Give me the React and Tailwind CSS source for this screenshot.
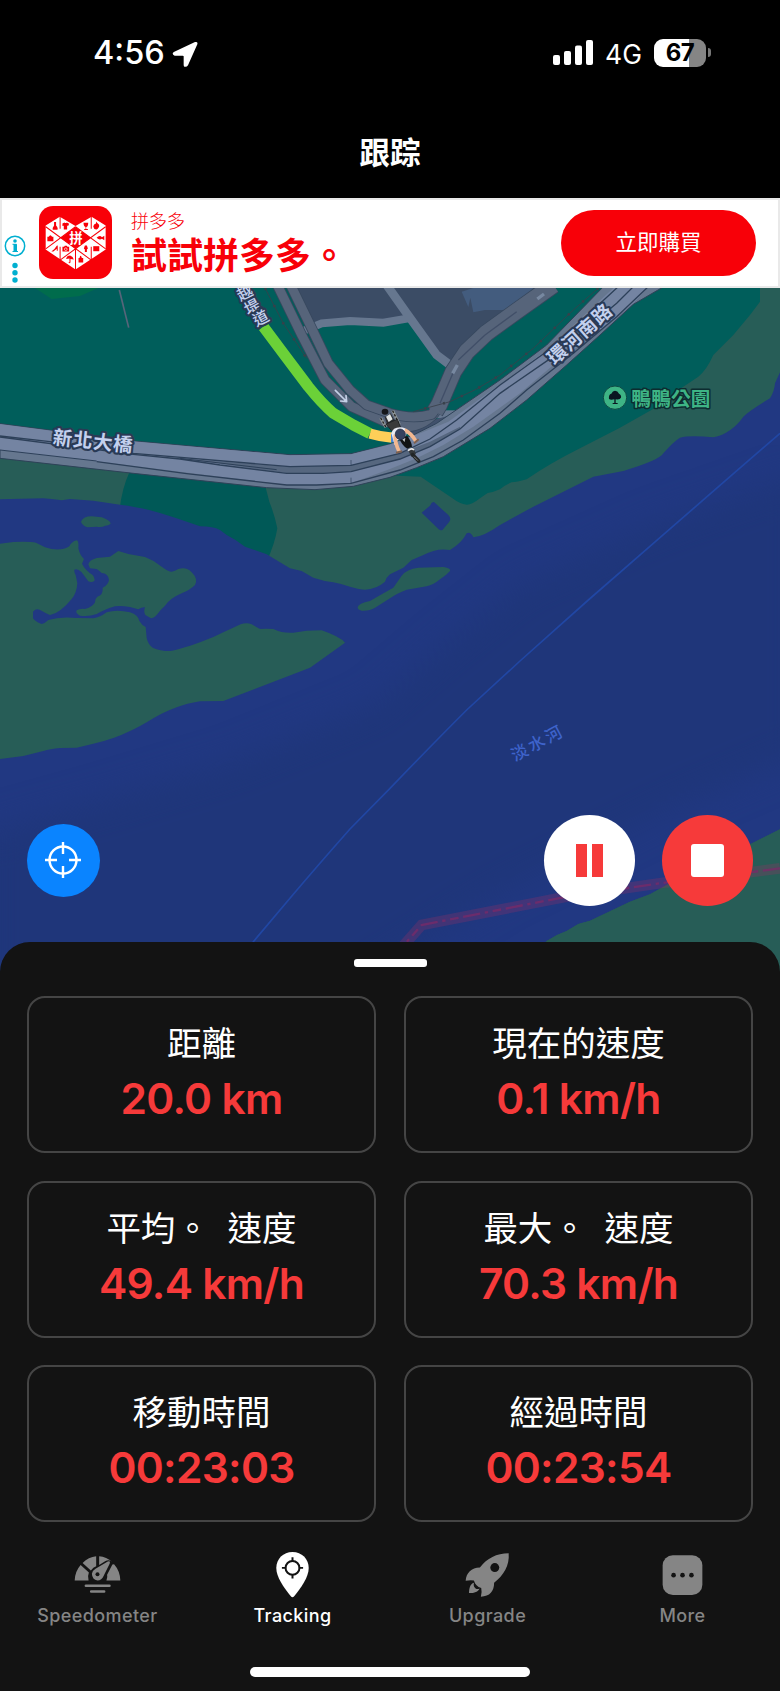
import React, { useState } from 'react'

const CJK = "font-['Noto_Sans_CJK_TC',sans-serif]"

const stats = [
  { label: '距離', value: '20.0 km' },
  { label: '現在的速度', value: '0.1 km/h' },
  { label: '平均。 速度', value: '49.4 km/h' },
  { label: '最大。 速度', value: '70.3 km/h' },
  { label: '移動時間', value: '00:23:03' },
  { label: '經過時間', value: '00:23:54' },
]

const tabs = [
  { name: 'Speedometer', Icon: SpeedometerIcon },
  { name: 'Tracking', Icon: PinIcon },
  { name: 'Upgrade', Icon: RocketIcon },
  { name: 'More', Icon: MoreIcon },
]

function SpeedometerIcon() {
  return (
    <svg viewBox="160 62 142 142" className="w-[47px] h-[47px]" fill="currentColor">
      <path d="M162 151Q163 123 180 104L205 127Q200 139 204 151Z" />
      <path d="M186 98Q204 80 227 78V108Q218 111 211 121Z" />
      <path d="M236 78Q258 80 276 95Q266 86 254 93L236 104Z" />
      <path d="M281 102Q299 122 300 151H258Q262 141 260 134L276 103Z" />
      <path d="M214 131Q215 122 225 116L262 94Q271 91 268 100L249 138Q244 150 231 151Q215 149 214 131Z" />
      <circle cx="231" cy="132" r="6" fill="#131313" />
      <path d="M196 167H267M212 184.500H251" stroke="currentColor" strokeWidth="8" strokeLinecap="round" />
    </svg>
  )
}

function PinIcon() {
  return (
    <svg viewBox="746 62 142 142" className="w-[47px] h-[47px]">
      <path d="M817 65C789 65 768 86 768 113C768 141 791 172 812 199Q817 205 822 199C843 172 866 141 866 113C866 86 845 65 817 65Z" fill="currentColor" />
      <circle cx="817" cy="113" r="21" fill="none" stroke="#131313" strokeWidth="6" />
      <path d="M817 81V94M817 132V145M785 113H798M836 113H849" stroke="#131313" strokeWidth="6" />
    </svg>
  )
}

function RocketIcon() {
  return (
    <svg viewBox="102 62 142 142" className="w-[47px] h-[47px]">
      <path
        fill="currentColor"
        d="M237 69C200 69 172 84 150 112C124 113 109 128 107 152Q121 149 132 151C135 163 143 170 154 174Q157 187 153 200C180 199 193 184 193 158C222 135 240 107 237 69Z"
      />
      <circle cx="195" cy="112" r="13.500" fill="#131313" />
      <path fill="currentColor" d="M132 158C120 162 118 174 117 189C134 189 145 185 149 175Q144 178 138 176Q129 170 132 158Z" />
    </svg>
  )
}

function MoreIcon() {
  return (
    <svg viewBox="685 62 142 142" className="w-[47px] h-[47px]">
      <rect x="696" y="75" width="120" height="120" rx="31" fill="currentColor" />
      <circle cx="729" cy="135" r="7" fill="#131313" />
      <circle cx="756" cy="135" r="7" fill="#131313" />
      <circle cx="783" cy="135" r="7" fill="#131313" />
    </svg>
  )
}

function StatusBar() {
  return (
    <div className="flex items-center justify-between h-[104px] pl-[93px] pr-[69px] text-white font-['Inter',sans-serif]">
      <div className="flex items-center gap-[7px] pt-[3px]">
        <span className="text-[32.500px] leading-none font-medium">4:56</span>
        <svg viewBox="274 60 78 78" className="w-[26px] h-[26px]">
          <path d="M281 92L343 63Q352 61 350 70L322 133Q318 139 311 137Q309 136 309 131V106Q309 104 306 104H282Q276 103 276 97Q277 94 281 92Z" fill="white" />
        </svg>
      </div>
      <div className="flex items-center pt-px">
        <svg viewBox="0 0 40 25" className="w-10 h-[25px]">
          <rect x="0" y="15" width="7" height="10" rx="2" fill="white" />
          <rect x="11" y="11" width="7" height="14" rx="2" fill="white" />
          <rect x="22" y="5.500" width="7" height="19.500" rx="2" fill="white" />
          <rect x="33" y="0" width="7" height="25" rx="2" fill="white" />
        </svg>
        <span className="ml-3 pt-[3px] text-[26.500px] leading-none">4G</span>
        <div className="ml-[12px] w-[52px] h-7 rounded-[9px] bg-[linear-gradient(90deg,#fff_67%,#858585_67%)] flex items-center justify-center">
          <span className="text-black text-[24px] leading-none font-bold tracking-[-0.5px]">67</span>
        </div>
        <div className="ml-[2px] w-[3px] h-[9px] rounded-r-full bg-[#777]"></div>
      </div>
    </div>
  )
}

function AdLogo() {
  return (
    <svg viewBox="118 50 218 218" className="w-[73px] h-[73px] shrink-0">
      <rect x="118" y="50" width="218" height="218" rx="42" fill="#f80008" />
      <path d="M138 108L180 82L227 110L275 82L317 108V180L227 240L138 180Z" fill="white" />
      <path
        d="M138 112L272 210M317 112L183 210M227 112L138 178M227 112L317 178M181 80V118M181 172V212M274 80V118M274 172V212M227 176V242"
        stroke="#f80008" strokeWidth="3" fill="none"
      />
      <path d="M183 145L227 113L272 145L227 178Z" fill="#f80008" />
      <text x="228" y="160" textAnchor="middle" fontSize="40" fontWeight="700" fill="white" className={CJK}>拼</text>
      <g fill="#f80008">
        <path d="M163 98H169V108Q176 116 173 121H159Q157 116 163 108Z" />
        <path d="M188 102L194 99Q197 103 201 99L208 103L205 110L202 108V120H192V109L188 110Z" />
        <path d="M251 100H265Q265 112 259 113V119H264V122H253V119H257V113Q251 111 251 100Z" />
        <path d="M289 96L292 101Q300 106 297 113Q293 121 289 120Q281 119 280 111Q281 103 288 102Z" />
        <path d="M143 142H147Q152 132 157 142H161V155H143Z" />
        <path d="M290 145Q299 136 306 143L313 139V152L306 148Q299 154 290 145Z" />
        <path d="M174 168V184H171V178L161 186H155Q165 180 171 169Z" />
        <path d="M188 172H193L195 169H201L203 172H208V186H188Z" />
        <path d="M255 168H261L264 177L261 180V187H255V180L252 177Z" />
        <path d="M280 170H298V185H280Z" />
        <path d="M199 208Q201 198 211 198Q220 201 222 210L212 208V219Q208 223 206 218H209V207Z" />
        <path d="M236 205H239Q242 192 246 205H250V219H236Z" />
      </g>
      <circle cx="198" cy="179" r="4" fill="none" stroke="white" strokeWidth="2" />
    </svg>
  )
}

function AdBanner() {
  return (
    <div className="h-[90px] flex items-center bg-white border-2 border-[#e9e9e9] pr-[22px]">
      <div className="w-[26px] mt-[34px] flex flex-col items-center">
        <svg viewBox="0 0 22 50" className="w-[22px] h-[50px]">
          <circle cx="11" cy="11" r="9.700" fill="none" stroke="#00afd0" strokeWidth="1.500" />
          <circle cx="11" cy="6" r="1.800" fill="#00afd0" />
          <path d="M8.500 9.300H12.500V16.500M8.500 16.500H14" stroke="#00afd0" strokeWidth="1" fill="none" />
          <path d="M11 9V17" stroke="#00afd0" strokeWidth="3" />
          <circle cx="11" cy="30.500" r="2.700" fill="#00afd0" />
          <circle cx="11" cy="37.800" r="2.700" fill="#00afd0" />
          <circle cx="11" cy="45" r="2.700" fill="#00afd0" />
        </svg>
      </div>
      <div className="ml-[11px] mb-px">
        <AdLogo />
      </div>
      <div className={`ml-[19px] mb-[5px] flex-1 text-[#f80008] ${CJK}`}>
        <p className="text-[18px] leading-[24px] font-light">拼多多</p>
        <p className="text-[36px] leading-[42px] font-bold">試試拼多多。</p>
      </div>
      <button className={`w-[195px] h-[66px] pb-[4px] rounded-full bg-[#f80008] text-white text-[21.500px] leading-none ${CJK}`}>
        立即購買
      </button>
    </div>
  )
}

function Motorcycle() {
  return (
    <g transform="translate(1050 315)">
      <path d="M92 84L108 112M128 62L148 104" stroke="#8d9496" strokeWidth="9" />
      <path d="M92 84L108 112M128 62L148 104" stroke="#222" strokeWidth="4" strokeDasharray="7 5" />
      <ellipse cx="105" cy="65" rx="10" ry="9" fill="#15171a" />
      <path d="M104 82L122 70L134 92L112 104Z" fill="#2b2e31" />
      <path d="M108 80L120 72L128 88L116 96Z" fill="#dfe3e2" />
      <path d="M108 102L142 88L152 112L126 124Z" fill="#3a3a3a" stroke="#17191b" strokeWidth="2" />
      <path d="M124 130Q128 112 150 112Q168 112 172 124L166 142L140 152L134 166Z" fill="#e8ebf4" />
      <path d="M136 134Q134 158 148 186" stroke="#f2b78f" strokeWidth="11" fill="none" />
      <path d="M164 120Q184 130 198 154" stroke="#f2b78f" strokeWidth="11" fill="none" />
      <path d="M138 188L156 184M192 160L206 148" stroke="#7d6050" strokeWidth="6" />
      <path d="M146 142L172 138Q186 158 186 170L172 176Q156 168 146 142Z" fill="#111314" />
      <path d="M156 148L166 144L164 156Z" fill="#b9bdbd" />
      <ellipse cx="151" cy="133" rx="15" ry="16" transform="rotate(-25 151 133)" fill="#35425f" stroke="#202a42" strokeWidth="2" />
      <path d="M174 180L190 174L198 192L184 200Z" fill="#33373a" />
      <path d="M174 182Q184 172 192 180" stroke="#e8e8e8" strokeWidth="5" fill="none" />
      <path d="M188 194L206 213" stroke="#222526" strokeWidth="11" strokeLinecap="round" />
      <path d="M192 200L204 212" stroke="#77797a" strokeWidth="3" />
    </g>
  )
}

// Map tile, drawn at three units per pixel
function MapCanvas() {
  return (
    <svg viewBox="0 9 2340 2076" className="block w-[780px] h-[692px]">
      <defs>
        <filter id="soft" x="-20%" y="-20%" width="140%" height="140%" colorInterpolationFilters="sRGB">
          <feGaussianBlur stdDeviation="50" />
        </filter>
        <clipPath id="river">
          <rect x="0" y="640" width="2340" height="1450" />
          <rect x="1700" y="480" width="640" height="400" />
        </clipPath>
      </defs>

      {/* Ground and parks */}
      <rect x="0" y="0" width="2340" height="2090" fill="#275d57" />
      <path
        d="M0 0H2280V50L2250 90L2200 150L2140 210Q2120 255 2095 275L2040 312L1990 355L1860 428L1740 490Q1650 535 1580 583Q1550 592 1535 592Q1515 600 1500 613Q1480 622 1463 624L1440 640Q1415 660 1400 659Q1380 657 1355 638L1262 575L0 520Z"
        fill="#005e5b"
      />
      <path d="M390 558Q365 610 358 680L800 830Q825 775 832 730Q824 690 808 650L795 600Z" fill="#005957" />
      <path d="M105 9L155 42L240 33L295 9Z" fill="#006c4c" />
      <path d="M358 15L386 128" stroke="#56657a" strokeWidth="5" />

      {/* River */}
      <path
        d="M0 643L130 640Q165 643 185 646L210 642L280 647L360 659Q430 668 480 684L530 700L600 724Q640 724 660 735L680 750Q710 765 735 785L800 808L870 850L905 858L940 878Q970 888 1000 892Q1030 898 1050 905Q1080 914 1095 914Q1130 912 1155 890Q1158 878 1170 868L1210 848L1235 825L1270 810Q1310 788 1350 795Q1385 775 1400 745Q1412 739 1420 757Q1450 755 1500 720L1600 665L1690 620L1780 575L1870 558Q1980 525 1990 505Q2020 470 2040 458Q2070 450 2140 457Q2195 445 2230 395Q2250 375 2310 340Q2323 320 2325 295L2340 262V1633L2250 1678L2000 1800L1950 1828L1890 1850L1770 1907L1735 1917L1700 1938Q1670 1948 1640 1968L1500 2090H0Z"
        fill="#213882"
      />
      <g clipPath="url(#river)">
        <path d="M2420 560L1960 720L1560 900L1320 1090L1120 1260L700 1430L300 1550L-60 1650V2140H1000L1500 1830L2000 1580L2420 1400Z" fill="#1f367a" filter="url(#soft)" />
      </g>
      <path d="M2340 1633L2250 1678L2000 1800L1950 1828L1890 1850L1770 1907L1735 1917L1700 1938Q1670 1948 1640 1968L1560 2090H2340Z" fill="#275d57" />
      <path d="M2340 445L2190 575L1960 775L1765 945L1560 1128L1400 1275Q1300 1375 1170 1510L1050 1632Q950 1745 880 1828L760 1970L700 2050" fill="none" stroke="#2147a4" strokeWidth="5" />

      {/* Islands */}
      <g fill="#275d57">
        <path d="M0 776L40 771Q90 769 108 773L135 787Q180 802 208 784Q215 770 230 766Q237 768 235 790Q240 812 252 822L246 836Q255 855 278 870Q286 880 283 888Q275 894 265 889L245 862Q233 850 223 854Q222 862 227 870L232 895Q230 925 215 942Q180 985 150 990Q135 984 126 978Q110 967 99 980V1000Q105 1010 125 1017Q135 1015 145 1005Q180 994 230 999L280 1000Q300 997 320 982Q350 972 390 982Q415 990 418 1008Q425 1020 437 1026L440 1060Q445 1080 458 1088Q480 1098 510 1098Q530 1097 600 1072Q640 1058 670 1042L722 1018Q740 1011 755 1018L780 1032Q800 1030 820 1032Q850 1046 880 1043L920 1037L965 1036Q1020 1055 1035 1073L930 1148L670 1248L600 1249Q560 1255 530 1267Q490 1282 460 1300Q420 1325 390 1338Q340 1363 280 1376L230 1388L180 1389Q150 1392 130 1398L70 1413L0 1422Z" />
        <path d="M265 838Q268 825 290 819L330 815L355 798L385 807L435 816Q460 825 485 845Q505 860 515 860Q525 858 535 852Q560 845 575 862Q595 882 585 900Q570 915 545 925Q510 940 495 962Q480 975 470 990Q460 1000 453 1000L436 990Q430 980 435 967Q425 966 415 973L390 966Q365 962 345 964Q310 975 290 987Q265 996 240 992Q225 985 230 976Q240 970 255 972Q280 965 285 952Q285 940 292 935Q310 930 308 908Q325 900 327 885Q325 865 305 864Q295 855 290 852L270 850Z" />
        <path d="M243 710Q250 694 275 694L305 697Q330 705 332 716Q325 722 316 722Q305 728 290 725L262 727Q245 720 243 710Z" />
        <path d="M1073 967Q1075 955 1110 948Q1140 930 1180 908L1205 872Q1220 852 1255 848L1330 846Q1355 850 1350 858Q1340 870 1320 883Q1300 900 1280 904L1220 914Q1190 925 1170 940L1125 968Q1110 978 1085 977Q1073 975 1073 967Z" />
      </g>
      <path d="M1265 683L1290 662Q1297 645 1306 655L1345 690Q1355 700 1348 710L1328 734Q1323 738 1316 733Z" fill="#213882" />

      {/* City block and small streets */}
      <path d="M880 9L940 112L1050 102L1170 107L1230 100L1345 250L1400 170L1600 30L1640 9Z" fill="#3b4c65" />
      <path d="M1385 20L1405 66L1411 38L1420 82L1455 75H1508L1545 70L1600 9H1420Z" fill="#435c7e" />
      <g fill="none" stroke="#66778f">
        <path d="M905 140L965 115L1050 108L1150 113L1225 100" strokeWidth="24" />
        <path d="M1160 0L1220 85L1310 210L1350 240" strokeWidth="26" />
        <path d="M1310 388H1390" strokeWidth="24" />
      </g>
      <path d="M1310 402L1400 378L1380 405L1240 460L1220 430Z" fill="#41516c" />

      {/* Ramps */}
      <g fill="none" strokeLinejoin="round">
        <path d="M832 0L905 150L975 285L1055 365L1150 408L1230 425Q1290 415 1320 360L1350 280" stroke="#37485e" strokeWidth="32" />
        <path d="M832 0L905 150L975 285L1055 365L1150 408L1230 425Q1290 415 1320 360L1350 280" stroke="#56647a" strokeWidth="27" />
        <path d="M872 0L935 130L985 235L1050 315L1100 360L1170 385Q1240 405 1295 388L1318 358" stroke="#37485e" strokeWidth="32" />
        <path d="M1305 380L1318 358L1360 260L1400 200L1458 145L1545 82L1660 0" stroke="#37485e" strokeWidth="53" />
        <path d="M872 0L935 130L985 235L1050 315L1100 360L1170 385Q1240 405 1295 388L1318 358" stroke="#56647a" strokeWidth="27" />
        <path d="M1305 380L1318 358L1360 260L1400 200L1458 145L1545 82L1660 0" stroke="#56647a" strokeWidth="48" />
        <path d="M1320 355L1360 262M1375 225L1455 150L1550 80" stroke="#414f68" strokeWidth="4" />
        <path d="M1358 265L1372 240M1612 42L1632 27" stroke="#7788a0" strokeWidth="10" />
      </g>

      {/* Railway */}
      <g fill="none" stroke="#38404a">
        <path d="M795 9L850 115L920 220M1795 9L1720 75L1600 190L1500 270L1430 312L1350 350L1240 380" strokeWidth="2.500" />
        <path d="M795 9L850 115L920 220M1795 9L1720 75L1600 190L1500 270L1430 312L1350 350L1240 380" strokeWidth="8" strokeDasharray="6 52" />
      </g>

      {/* Bridge */}
      <path d="M0 416L400 468L870 509L1053 506L1170 478L1240 450L1310 415L1500 285L1640 180L1815 0H2000L1900 58L1800 150L1700 240L1580 345L1470 430L1330 515L1250 548L1170 577L1060 604L945 614L800 608L400 565L0 520Z" fill="#66778f" stroke="#2e4258" strokeWidth="3" />
      <path d="M0 417L400 469L870 511L1053 508L1170 478L1240 453L1345 410L1500 298L1640 195L1850 0H1950L1900 55L1780 150L1660 240L1560 325L1420 425L1330 480L1250 520L1170 552L1053 595L950 600H860L300 530L0 495Z" fill="#7484a2" />
      <path d="M480 516L870 545L1053 541L1200 505L1290 470L1380 425L1380 432L1290 485L1200 522L1053 560L970 564H860L640 533Z" fill="#56677f" />
      <g fill="none" stroke="#2d4059" strokeWidth="4">
        <path d="M0 453L150 470L400 505L870 545L1053 541L1200 505L1290 462L1370 405L1500 300L1660 185L1860 0" />
        <path d="M0 456L400 508L540 522L660 540L860 565H970L1053 560L1200 522L1290 485L1380 432L1500 325L1655 218L1850 55L1905 0" />
        <path d="M290 530L560 566L860 600H950L1053 595L1200 555L1300 515L1390 465L1500 385L1580 315L1720 205L1850 95L1950 0" />
        <path d="M0 495L290 528M540 520L830 554" strokeWidth="3" />
        <path d="M1053 525V541M1053 578V595" strokeWidth="2" />
      </g>

      {/* Recorded track */}
      <g fill="none" strokeLinecap="round" strokeLinejoin="round">
        <path d="M728 45L765 108" stroke="#4fae2c" strokeWidth="5" />
        <path d="M790 125L850 205L925 305Q965 355 1000 385L1060 420L1110 446" stroke="#6bd138" strokeWidth="33" strokeLinecap="butt" />
        <path d="M1110 446Q1140 455 1175 458" stroke="#ffcf58" strokeWidth="31" strokeLinecap="butt" />
        <path d="M1173 459H1188" stroke="#4d87d8" strokeWidth="26" strokeLinecap="butt" />
        <path d="M1006 316L1038 348M1038 332L1040 350L1022 348" stroke="#c4d0e6" strokeWidth="5" />
      </g>
      <Motorcycle />

      {/* District border */}
      <g fill="none">
        <path d="M2340 1750L2250 1762L2000 1792L1690 1837L1265 1920L1190 2005" stroke="#9b2d66" strokeOpacity=".28" strokeWidth="32" />
        <path d="M2340 1750L2250 1762L2000 1792L1690 1837L1265 1920L1190 2005" stroke="#7a2a68" strokeOpacity=".75" strokeWidth="7" strokeDasharray="52 14 26 14 10 14" />
      </g>

      {/* Labels */}
      <g className={CJK} fontWeight="700" paintOrder="stroke" strokeLinejoin="round">
        <g fill="#c3d0ee" stroke="#293a55" strokeWidth="13">
          <text x="157" y="477" fontSize="58" letterSpacing="2.500" transform="rotate(6 157 477)">新北大橋</text>
          <text x="1664" y="242" fontSize="57" letterSpacing="3" transform="rotate(-42 1664 242)">環河南路</text>
          <text x="735" y="40" fontSize="47" fontWeight="500" textAnchor="middle" transform="rotate(-28 735 24)">越</text>
          <text x="757" y="82" fontSize="47" fontWeight="500" textAnchor="middle" transform="rotate(-28 757 66)">堤</text>
          <text x="783" y="116" fontSize="47" fontWeight="500" textAnchor="middle" transform="rotate(-28 783 100)">道</text>
        </g>
        <text x="1894" y="363" fontSize="59" letterSpacing="0.500" fill="#3eb485" stroke="#0d2c30" strokeWidth="9">鴨鴨公園</text>
        <text x="1545" y="1430" fontSize="50" fontWeight="500" letterSpacing="8" transform="rotate(-28 1545 1430)" fill="#3e63cb">淡水河</text>
      </g>
      <circle cx="1845" cy="338" r="35" fill="#3eb485" stroke="#0d4a45" strokeWidth="3" />
      <path d="M1827 342Q1825 328 1834 326Q1838 317 1845 317Q1853 317 1857 326Q1865 330 1863 338Q1860 345 1847 343V354H1853V357H1838V354H1843V343Q1832 346 1827 342Z" fill="#0a1720" />
    </svg>
  )
}

function MapControls({ paused, onToggle }) {
  return (
    <div className="absolute left-[27px] right-[27px] top-[526.500px] flex items-center">
      <button aria-label="Locate" className="w-[73px] h-[73px] pr-px rounded-full bg-[#0a84ff] flex items-center justify-center">
        <svg viewBox="0 0 36 36" className="w-9 h-9" fill="none" stroke="white" strokeWidth="2.400">
          <circle cx="18" cy="18" r="13.500" />
          <path d="M18 0V12M18 24V36M0 18H12M24 18H36" />
        </svg>
      </button>
      <button
        aria-label={paused ? 'Resume' : 'Pause'}
        onClick={onToggle}
        className="ml-auto w-[91px] h-[91px] rounded-full bg-white flex items-center justify-center gap-[5px]"
      >
        <span className="w-[11px] h-[33px] bg-[#f63a3a]"></span>
        <span className="w-[11px] h-[33px] bg-[#f63a3a]"></span>
      </button>
      <button aria-label="Stop" className="ml-[27px] w-[91px] h-[91px] rounded-full bg-[#f63a3a] flex items-center justify-center">
        <span className="w-[33px] h-[33px] rounded-[3px] bg-white"></span>
      </button>
    </div>
  )
}

export default function App() {
  const [paused, setPaused] = useState(false)
  const [activeTab, setActiveTab] = useState('Tracking')

  return (
    <div className="w-[780px] h-[1691px] overflow-hidden bg-[#131313] font-['Inter','Noto_Sans_CJK_TC',sans-serif]">
      {/* Header */}
      <header className="h-[198px] bg-black">
        <StatusBar />
        <h1 className={`h-[94px] pt-[24px] text-center text-white text-[30.500px] leading-[46px] font-bold ${CJK}`}>跟踪</h1>
      </header>

      <AdBanner />

      <div className="relative">
        <MapCanvas />
        <MapControls paused={paused} onToggle={() => setPaused(!paused)} />
      </div>

      {/* Stats sheet */}
      <section className="relative -mt-[38px] h-[594px] rounded-t-[30px] bg-[#131313] px-[27px] pt-[17px]">
        <div className="mx-auto w-[73px] h-[8px] rounded-[3px] bg-white"></div>
        <div className="mt-[29px] grid grid-cols-2 gap-x-[28px] gap-y-[27.500px]">
          {stats.map((s) => (
            <div key={s.label} className="h-[157px] rounded-[18px] border-2 border-[#454545] flex flex-col items-center pt-[18px]">
              <p className={`text-[34.500px] leading-[50px] text-white whitespace-pre [word-spacing:10px] ${CJK}`}>{s.label}</p>
              <p className="mt-[7px] text-[42.500px] leading-[52px] font-semibold tracking-[-0.7px] text-[#f63a3a]">{s.value}</p>
            </div>
          ))}
        </div>
      </section>

      {/* Tab bar */}
      <nav className="grid grid-cols-4">
        {tabs.map(({ name, Icon }) => (
          <button
            key={name}
            onClick={() => setActiveTab(name)}
            className={`flex flex-col items-center pt-[15px] ${activeTab === name ? 'text-white' : 'text-[#858585]'}`}
          >
            <Icon />
            <span className="mt-[6px] text-[18px] leading-[24px] font-medium tracking-[0.4px]">{name}</span>
          </button>
        ))}
      </nav>
      <div className="mx-auto mt-[39px] w-[280px] h-[10px] rounded-full bg-white"></div>
    </div>
  )
}
